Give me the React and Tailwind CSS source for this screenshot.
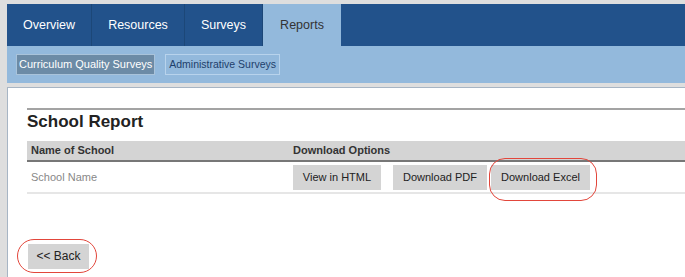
import React from 'react';

const tabs = [
  { label: 'Overview', w: 'w-[85px]' },
  { label: 'Resources', w: 'w-[93px]' },
  { label: 'Surveys', w: 'w-[78px]' },
  { label: 'Reports', w: 'w-[78px]', active: true },
];

// Gray report button
const ReportButton = ({ children, className = '' }) => (
  <button
    className={`h-[25px] bg-[#d4d4d4] text-[11px] text-[#222] leading-none ${className}`}
  >
    {children}
  </button>
);

// Red hand-drawn style highlight around a button
const Highlight = ({ className }) => (
  <span
    className={`pointer-events-none absolute border-[1.5px] border-[#e2463b] ${className}`}
  />
);

export default function App() {
  return (
    <div className="min-h-screen bg-[#dedede] pt-[4px] pl-[7px] font-['Liberation_Sans',Arial,sans-serif] overflow-hidden">
      {/* Main tabs */}
      <nav className="flex h-[42px] bg-[#22528b]">
        {tabs.map((t) => (
          <div
            key={t.label}
            className={`${t.w} flex items-center justify-center text-[12.5px] ${
              t.active
                ? 'bg-[#93b9dc] text-[#333]'
                : 'text-white border-r border-[#1c4778]'
            }`}
          >
            {t.label}
          </div>
        ))}
      </nav>

      {/* Sub navigation */}
      <div className="h-[37px] bg-[#93b9dc] flex items-center pl-[9px] gap-[10px]">
        <span className="h-[21px] px-[2px] flex items-center bg-[#6c8ba6] border border-[#a9c3da] text-white text-[11px]">
          Curriculum Quality Surveys
        </span>
        <span className="h-[21px] px-[3px] flex items-center border border-[#b8d3ec] text-[#1e3f6b] text-[10.5px]">
          Administrative Surveys
        </span>
      </div>

      {/* Content panel */}
      <div className="mt-[4px] min-h-[190px] bg-white border-t border-l border-[#a7b5c4] pl-[19px] pt-[20px]">
        <div className="border-t-2 border-[#a3a3a3]" />
        <h2 className="mt-[2px] mb-[9px] h-[20px] text-[17px] leading-[20px] font-bold text-[#222]">
          School Report
        </h2>

        <table className="w-full border-collapse text-[11px]">
          <thead>
            <tr className="h-[20px] bg-[#d4d4d4] border-b-2 border-[#777]">
              <th className="w-[266px] pl-[4px] text-left font-bold text-[#333]">Name of School</th>
              <th className="text-left font-bold text-[#333]">Download Options</th>
            </tr>
          </thead>
          <tbody>
            <tr className="h-[32px] border-b-2 border-[#e6e6e6]">
              <td className="pl-[4px] text-[#888]">School Name</td>
              <td>
                <div className="flex items-center">
                  <ReportButton className="w-[88px]">View in HTML</ReportButton>
                  <ReportButton className="w-[94px] ml-[12px]">Download PDF</ReportButton>
                  <span className="relative ml-[4px] flex">
                    <ReportButton className="w-[99px]">Download Excel</ReportButton>
                    <Highlight className="-left-[2px] -right-[7px] -top-[7px] -bottom-[11px] rounded-[16px]" />
                  </span>
                </div>
              </td>
            </tr>
          </tbody>
        </table>

        <div className="mt-[49px] ml-[1px] pb-[12px]">
          <span className="relative inline-flex">
            <button className="w-[61px] h-[25px] bg-[#d4d4d4] text-[12px] text-[#222] leading-none">
              &lt;&lt; Back
            </button>
            <Highlight className="-left-[11px] -right-[8px] -top-[5px] -bottom-[4px] rounded-full" />
          </span>
        </div>
      </div>
    </div>
  );
}
